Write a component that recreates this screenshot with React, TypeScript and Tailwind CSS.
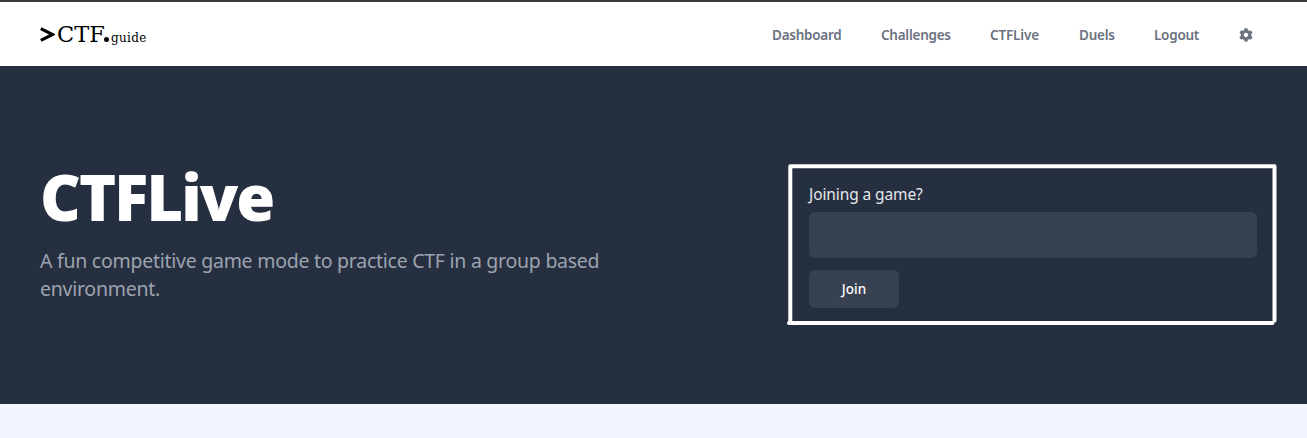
import { FaCog } from "react-icons/fa";

const links = [
  { label: "Dashboard", cls: "w-[69px] tracking-[-0.25px]" },
  { label: "Challenges", cls: "w-[69px] tracking-[-0.25px]" },
  { label: "CTFLive", cls: "w-[49px] tracking-[-0.15px]" },
  { label: "Duels", cls: "w-[35px] tracking-[-0.25px]" },
  { label: "Logout", cls: "w-[45px] tracking-[-0.25px]" },
];

function Logo() {
  return (
    <a href="#" className="flex h-8 items-center text-black">
      <svg className="mr-[2px] h-[15px] w-[15px]" viewBox="0 0 15 15" fill="none" stroke="currentColor" strokeWidth="3.2">
        <path d="M0.8 1.6 L12.6 7.5 L0.8 13.4" />
      </svg>
      <span className="flex items-baseline font-['DejaVu_Serif',serif]">
        <span className="w-[47px] text-[22.5px] leading-8 tracking-[0px]">CTF</span>
        <span className="-mb-px mr-[2px] h-[5px] w-[5px] rounded-full bg-black" />
        <span className="text-[12px] tracking-[0.3px]">guide</span>
      </span>
    </a>
  );
}

function Header() {
  return (
    <header className="flex h-[66px] items-center justify-between border-t-2 border-[#3b3b3b] bg-white pr-[54px] pl-10">
      <Logo />
      <nav className="flex items-center gap-10 pt-[2px] text-[13.5px] leading-5 font-semibold whitespace-nowrap text-[#6b7280]">
        {links.map((l) => (
          <a key={l.label} href="#" className={l.cls}>
            {l.label}
          </a>
        ))}
        <FaCog className="h-[14px] w-[14px]" />
      </nav>
    </header>
  );
}

function JoinPanel() {
  return (
    <div className="relative mt-[98px] h-[162px] w-[490px] pt-[18px] pr-[20px] pl-[22px]">
      <svg className="pointer-events-none absolute inset-0" width="490" height="162" fill="none" stroke="white" strokeWidth="4" strokeLinecap="round" strokeLinejoin="round">
        <path d="M3.3 157 V2.3 H487.5 V156.5" />
        <path d="M2 159 H485.5" />
      </svg>
      <label htmlFor="code" className="block text-[15.5px] leading-6 tracking-[-0.1px] whitespace-nowrap text-[#e5e7eb]">
        Joining a game?
      </label>
      <input id="code" className="mt-[6px] block h-[46px] w-full rounded-md bg-[#384152] px-3 text-white outline-none" />
      <button className="mt-3 block h-[38px] w-[90px] rounded-md bg-[#384152] text-[13.5px] leading-5 font-medium text-white">
        Join
      </button>
    </div>
  );
}

export default function App() {
  return (
    <div className="h-[438px] overflow-hidden bg-[#f0f5ff] font-['Noto_Sans','Open_Sans',sans-serif]">
      <Header />
      <main className="flex h-[338px] justify-between bg-[#262f40] pr-[30px] pl-10">
        <div className="pt-[99px]">
          <h1 className="text-[63px] leading-[64px] font-black tracking-[-1.9px] text-white">CTFLive</h1>
          <p className="mt-[18px] text-[19.5px] leading-7 tracking-[-0.26px] whitespace-nowrap text-[#9ca3af]">
            A fun competitive game mode to practice CTF in a group based
            <br />
            environment.
          </p>
        </div>
        <JoinPanel />
      </main>
    </div>
  );
}
